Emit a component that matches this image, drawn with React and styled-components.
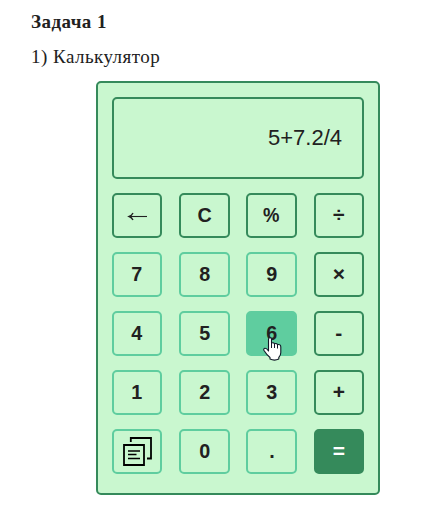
import React from "react";
import styled, { createGlobalStyle, css } from "styled-components";

const dark = "#358a5b";
const mint = "#5fcd9f";
const pale = "#c9f7cf";

const GlobalStyle = createGlobalStyle`
  * { box-sizing: border-box; }
  body { margin: 0; background: #fff; color: #212121; }
`;

const Page = styled.main`
  width: 426px;
  height: 518px;
  padding: 10px 0 0 31px;
  overflow: hidden;
  font-family: "Liberation Serif", "Times New Roman", serif;
`;

const Title = styled.h1`
  margin: 0;
  font-size: 19px;
  letter-spacing: 0.45px;
  line-height: 24px;
`;

const Subtitle = styled.p`
  margin: 11px 0 12px;
  font-size: 19px;
  letter-spacing: 0.47px;
  line-height: 24px;
`;

const Calculator = styled.section`
  width: 284px;
  height: 414px;
  margin-left: 65px;
  padding: 14px;
  border: 2px solid ${dark};
  border-radius: 5px;
  background: ${pale};
  font-family: "Liberation Sans", Arial, sans-serif;
`;

const Display = styled.output`
  display: flex;
  align-items: center;
  justify-content: flex-end;
  height: 82px;
  padding: 0 20px;
  margin-bottom: 14px;
  border: 2px solid ${dark};
  border-radius: 5px;
  font-size: 22px;
`;

const Keys = styled.div`
  display: grid;
  grid-template-columns: repeat(4, 50.4px);
  grid-auto-rows: 45px;
  justify-content: space-between;
  row-gap: 14px;
`;

const tones = {
  action: css`border-color: ${dark};`,
  digit: css`border-color: ${mint};`,
  hovered: css`border-color: ${mint}; background: ${mint};`,
  equals: css`border-color: ${dark}; background: ${dark}; color: #fff;`,
};

const Key = styled.button`
  position: relative;
  display: flex;
  align-items: center;
  justify-content: center;
  padding: 0;
  border: 2px solid;
  border-radius: 5px;
  background: transparent;
  color: #212121;
  font: bold 21px "Liberation Sans", Arial, sans-serif;
  ${({ $tone }) => tones[$tone]}
`;

const Label = styled.span`
  padding-bottom: 2px;
  transform: scaleX(${({ $stretch }) => $stretch});
`;

const Pointer = styled.svg`
  position: absolute;
  left: 15px;
  top: 24px;
  z-index: 1;
`;

const CopyIcon = () => (
  <svg width="30" height="30" viewBox="-1 0 30 30" fill="none" stroke="#000" strokeWidth="1.8">
    <path d="M7.8 5V1H28V21.5H24" />
    <path d="M1 8H21V28H1Z" />
    <path d="M5 14H17M5 17.5H13.5M5 21.5H17" strokeWidth="1.3" />
  </svg>
);

const ArrowIcon = () => (
  <svg width="20" height="11" viewBox="0 0 20 11" fill="none" stroke="#212121">
    <path d="M2.5 6.5H20" strokeWidth="1.1" />
    <path d="M6 3Q4.7 5.6 2.2 6.5Q4.7 7.4 6 10" strokeWidth="1.4" />
  </svg>
);

const HandPointer = () => (
  <Pointer width="19" height="25" viewBox="0 0 19 25">
    <path
      d="M5.5 14V2.2Q5.5 .8 7 .8Q8.5 .8 8.5 2.2V6Q10.8 5.2 11.5 6.8Q13.7 6 14.5 7.6Q17.8 7 17.8 10V15.5Q17.8 18.5 15.8 20.5V22Q11.5 24.2 7 22V20.5Q3.5 17.5 1 13.5Q.2 11.8 1.8 11.3Q3.5 11 5.5 14Z"
      fill="#fff"
      stroke="#111827"
      strokeWidth="1.1"
      strokeLinejoin="round"
    />
    <path d="M8.5 6V11M11.5 7V11M14.5 8V11.5" stroke="#111827" strokeWidth="1" />
  </Pointer>
);

const keys = [
  { label: "←", tone: "action", icon: <ArrowIcon /> },
  { label: "C", tone: "action" },
  { label: "%", tone: "action", stretch: 0.88 },
  { label: "÷", tone: "action", stretch: 1 },
  { label: "7", tone: "digit" },
  { label: "8", tone: "digit" },
  { label: "9", tone: "digit" },
  { label: "×", tone: "action", stretch: 1 },
  { label: "4", tone: "digit" },
  { label: "5", tone: "digit" },
  { label: "6", tone: "hovered", overlay: <HandPointer /> },
  { label: "-", tone: "action", stretch: 1 },
  { label: "1", tone: "digit" },
  { label: "2", tone: "digit" },
  { label: "3", tone: "digit" },
  { label: "+", tone: "action", stretch: 1 },
  { label: "copy", tone: "digit", icon: <CopyIcon /> },
  { label: "0", tone: "digit" },
  { label: ".", tone: "digit" },
  { label: "=", tone: "equals", stretch: 1 },
];

export default function App() {
  return (
    <Page>
      <GlobalStyle />
      <Title>Задача 1</Title>
      <Subtitle>1) Калькулятор</Subtitle>
      <Calculator>
        <Display>5+7.2/4</Display>
        <Keys>
          {keys.map(({ label, tone, icon, overlay, stretch = 0.94 }) => (
            <Key key={label} $tone={tone} aria-label={label}>
              {icon || <Label $stretch={stretch}>{label}</Label>}
              {overlay}
            </Key>
          ))}
        </Keys>
      </Calculator>
    </Page>
  );
}
